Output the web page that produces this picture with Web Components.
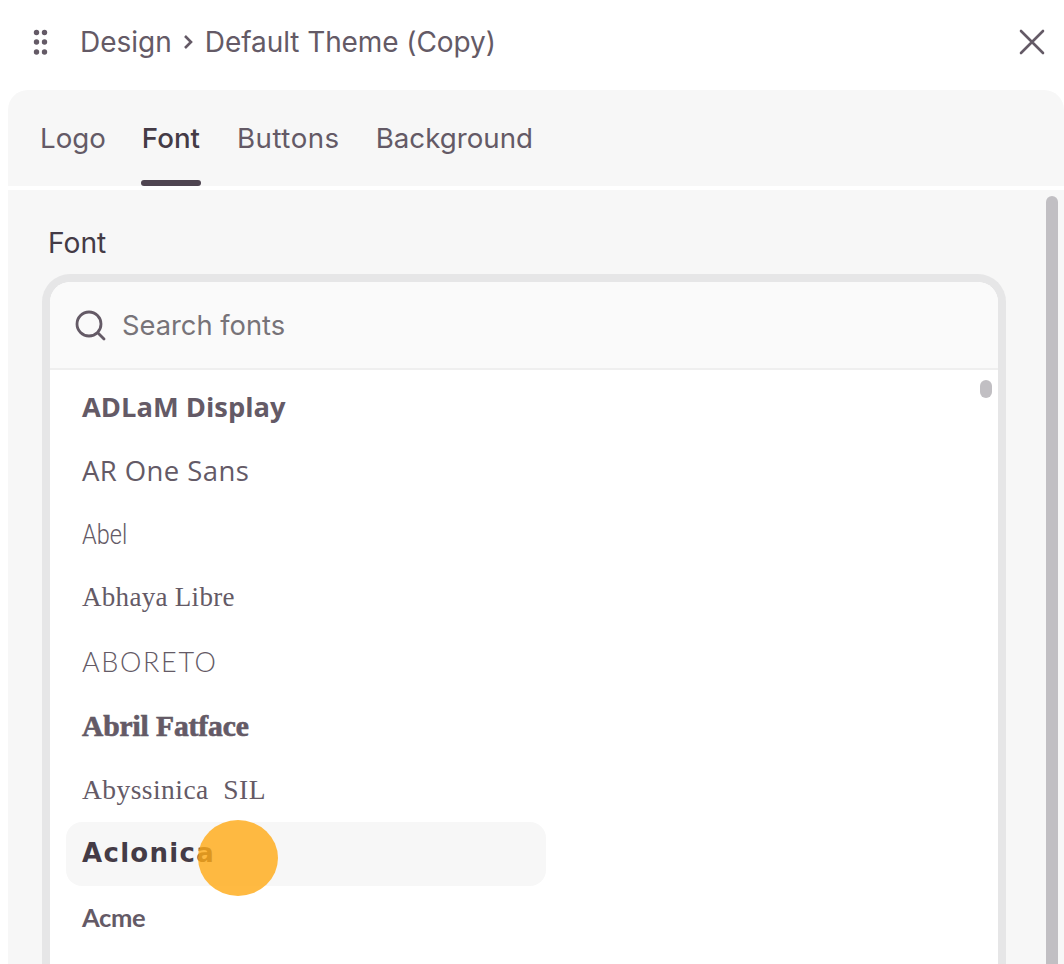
<!DOCTYPE html>
<html lang="en">
<head>
<meta charset="utf-8">
<title>Design</title>
<style>
html,body{margin:0;padding:0;background:#fff;height:964px;overflow:hidden;font-family:Inter,"Liberation Sans",sans-serif;color:#645a66}
</style>
</head>
<body>
<design-panel></design-panel>
<script>
function def(name, css, html){
  customElements.define(name, class extends HTMLElement{
    constructor(){super();const r=this.attachShadow({mode:'open'});r.innerHTML='<style>'+css+'</style>'+html;}
  });
}
def('panel-header',`
:host{display:flex;align-items:center;height:90px;box-sizing:border-box;padding:0 18px 6px 32px;font-size:28px;color:#645a66}
.t{flex:1;display:flex;align-items:center;margin-left:32px;white-space:nowrap}
.c{margin:0 12px 0 11px;display:block}
.n{letter-spacing:-.08px}
`,`
<svg width="16" height="26" viewBox="0 0 16 26" fill="#645a66"><circle cx="4.5" cy="3.5" r="2.7"/><circle cx="12.5" cy="3.5" r="2.7"/><circle cx="4.5" cy="13" r="2.7"/><circle cx="12.5" cy="13" r="2.7"/><circle cx="4.5" cy="23" r="2.7"/><circle cx="12.5" cy="23" r="2.7"/></svg>
<div class="t"><span>Design</span><svg class="c" width="10" height="16" viewBox="0 0 10 16" fill="none" stroke="#645a66" stroke-width="2.6"><path d="M2 2l6 6-6 6"/></svg><span class="n">Default Theme (Copy)</span></div>
<svg width="28" height="28" viewBox="0 0 28 28" fill="none" stroke="#645a66" stroke-width="2.6" stroke-linecap="round"><path d="M3 3l22 22M25 3L3 25"/></svg>
`);
def('tab-bar',`
:host{display:flex;gap:36px;height:96px;box-sizing:border-box;padding:0 0 0 32px;background:#f7f7f7;border-radius:20px 20px 0 0;font-size:27.7px;color:#645a66}
.tab{position:relative;line-height:97px;height:96px}
.on{color:#443b46;font-weight:500;padding:0 1px;margin-left:-1px}
.on::after{content:"";position:absolute;left:0;right:0;bottom:0;height:6px;background:#4f4551;border-radius:3px}
.b{letter-spacing:.5px}
`,`<div class="tab">Logo</div><div class="tab on">Font</div><div class="tab b">Buttons</div><div class="tab">Background</div>`);
def('font-row',`
:host{display:flex;align-items:center;position:relative;box-sizing:border-box;width:480px;height:64px;padding-left:16px;border-radius:16px;white-space:nowrap;color:#645a66}
:host([hover]){background:#f7f7f7;color:#443b46}
`,`<slot></slot>`);
def('cursor-dot',`
:host{position:absolute;left:132px;top:-2px;width:80px;height:76px;border-radius:50%;background:rgba(255,171,25,.82)}
`,``);
def('font-list',`
:host{display:block;box-sizing:border-box;margin:0 0 0 -6px;width:964px;border:8px solid #e6e6e7;border-bottom:0;border-radius:28px 28px 0 0;background:#fff;position:relative;height:690px;overflow:hidden}
.search{display:flex;align-items:center;gap:16px;height:86px;padding-left:24px;background:#fafafa;border-bottom:2px solid #efefef;font-size:27.3px;color:#777378;border-radius:20px 20px 0 0}
.rows{padding:4px 0 0 16px;display:flex;flex-direction:column}
.sb{position:absolute;left:930px;top:98px;width:12px;height:18px;border-radius:6px;background:#c1bfc3}
`,`
<div class="search"><svg width="32" height="32" viewBox="0 0 32 32" fill="none" stroke="#645a66" stroke-width="2.8" stroke-linecap="round"><circle cx="15" cy="15" r="12"/><path d="M24 24l6 6"/></svg><span>Search fonts</span></div>
<div class="rows"><slot></slot></div>
<div class="sb"></div>
`);
def('design-panel',`
:host{display:block;height:964px;overflow:hidden;position:relative}
.wrap{margin-left:8px}
.gap{height:4px}
.body{background:#f7f7f7;height:774px;padding:33px 0 0 40px;box-sizing:border-box;position:relative;overflow:hidden}
.label{font-size:28.2px;line-height:40px;color:#443b46;margin-bottom:11px}
.scroll{position:absolute;left:1038px;top:6px;bottom:0;width:12px;border-radius:6px 6px 0 0;background:#c1bfc3}
.a{font:700 27.3px "Open Sans",sans-serif}
.b{font:400 27.5px "Open Sans",sans-serif;letter-spacing:.42px}
.c{font:300 28px Roboto,sans-serif;display:inline-block;transform:scaleX(.84);transform-origin:left center}
.d{font:400 27px "Liberation Serif",serif;letter-spacing:.3px;margin-bottom:1px}
.e{font:300 27px Lato,sans-serif;letter-spacing:1.65px;margin-bottom:1px}
.f{font:700 29.5px "Liberation Serif",serif;letter-spacing:-.1px;-webkit-text-stroke:.7px currentColor;margin-top:1px}
.g{font:400 27.5px "Liberation Serif",serif;letter-spacing:.45px}
.h{font:700 26px "DejaVu Sans",sans-serif;letter-spacing:1.3px;margin-bottom:3px}
.i{font:700 25.5px Lato,sans-serif;letter-spacing:-.3px;margin-bottom:3px}
`,`
<panel-header></panel-header>
<div class="wrap">
<tab-bar></tab-bar>
<div class="gap"></div>
<div class="body">
<div class="label">Font</div>
<font-list>
<font-row><span class="a">ADLaM Display</span></font-row>
<font-row><span class="b">AR One Sans</span></font-row>
<font-row><span class="c">Abel</span></font-row>
<font-row><span class="d">Abhaya Libre</span></font-row>
<font-row><span class="e">ABORETO</span></font-row>
<font-row><span class="f">Abril Fatface</span></font-row>
<font-row><span class="g">Abyssinica&nbsp; SIL</span></font-row>
<font-row hover><span class="h">Aclonica</span><cursor-dot></cursor-dot></font-row>
<font-row><span class="i">Acme</span></font-row>
</font-list>
<div class="scroll"></div>
</div>
</div>
`);
</script>
</body>
</html>
